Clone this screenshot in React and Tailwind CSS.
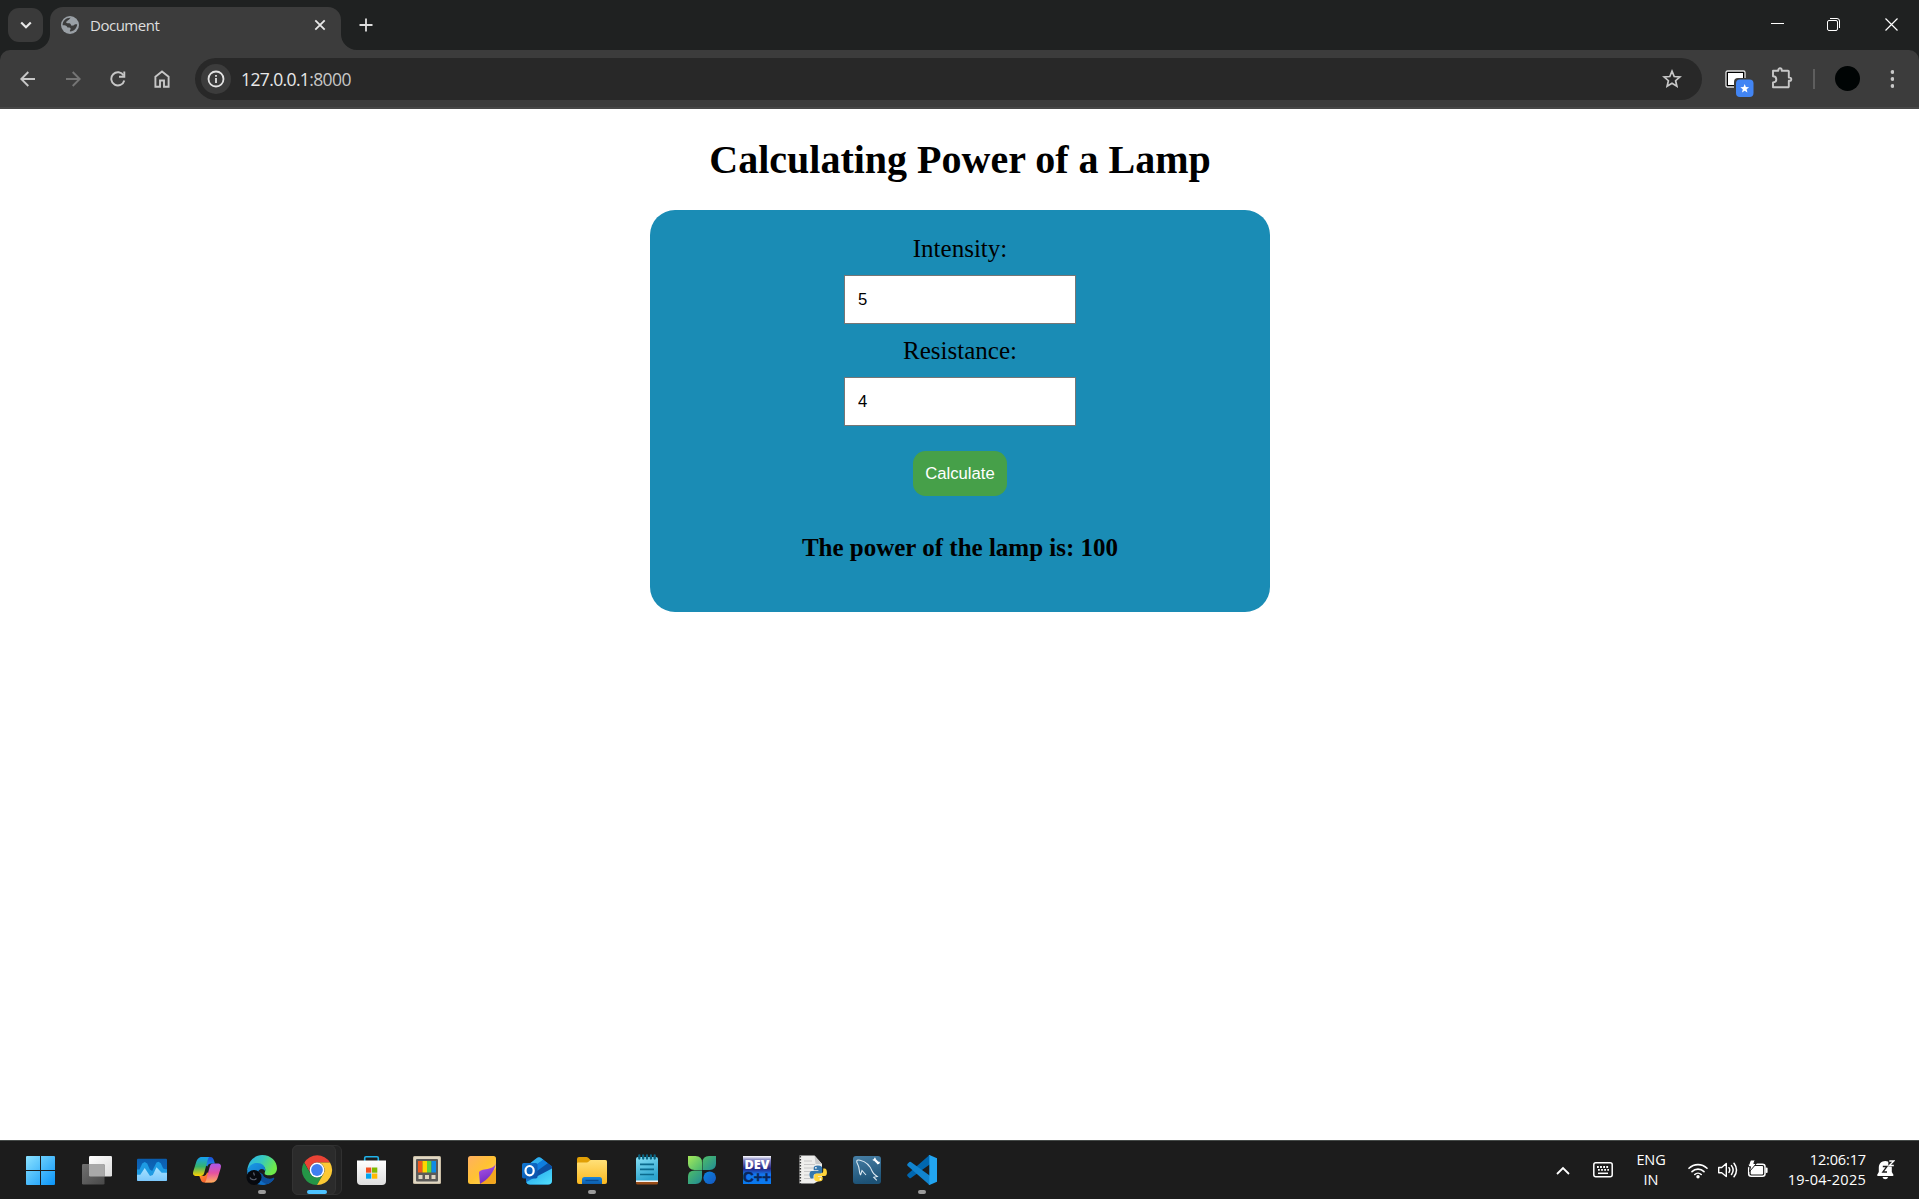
import React from "react";

const Svg = ({ w, h, className = "", children }) => (
  <svg width={w} height={h} viewBox={`0 0 ${w} ${h}`} fill="none" className={`block shrink-0 ${className}`}>
    {children}
  </svg>
);

function TabStrip() {
  return (
    <div className="flex h-[50px] items-end bg-[#1f2121] pl-2 text-[#dedede]">
      <div className="mb-2 flex h-[34px] w-[35px] shrink-0 items-center justify-center rounded-[11px] bg-[#3a3a3a]">
        <Svg w={12} h={8}>
          <path d="M1.2 1.500 6 6.200l4.800-4.700" stroke="#e8e8e8" strokeWidth="2.200" />
        </Svg>
      </div>
      <Svg w={16} h={16} className="-ml-[9px]">
        <path d="M16 0v16H0A16 16 0 0 0 16 0Z" fill="#3c3c3c" />
      </Svg>
      <div className="flex h-[43px] w-[291px] shrink-0 items-center rounded-t-[13px] bg-[#3c3c3c] pb-[7px] pl-[11px] pr-[15px]">
        <Svg w={18} h={18}>
          <circle cx="9" cy="9" r="9" fill="#9aa0a6" />
          <path
            d="M9.800 1.800c-1.200.7-1.300 2-2.300 2.200-1.200.2-.8 1.400-1.900 1.600-.9.200-.3 1.700.7 1.700 1.500 0 3.300-.3 3.600 1.500.2 1.300 1.600.8 2.400.7 1-.2 1.100-1.200 2-1.300h1.900c-.3 4-3.200 7-6.900 7.300-.7-.4-.4-1.600.2-2.100.5-.5-.2-1.800-1.200-1.800H6.500c-.4-1.700-1.900-2.300-4.900-2.300C1.500 5 5 1.500 9.800 1.800Z"
            fill="#3c3c3c"
          />
        </Svg>
        <span className="ml-[11px] grow font-['Open_Sans',sans-serif] text-[15px] leading-5 tracking-[-0.480px]">Document</span>
        <Svg w={12} h={12}>
          <path d="m1.300 1.300 9.400 9.400m0-9.400-9.400 9.400" stroke="#e8e8e8" strokeWidth="1.800" />
        </Svg>
      </div>
      <Svg w={16} h={16}>
        <path d="M0 0v16h16A16 16 0 0 1 0 0Z" fill="#3c3c3c" />
      </Svg>
      <Svg w={14} h={14} className="mb-[18px] ml-[2px]">
        <path d="M7 .5v13M.5 7h13" stroke="#dedede" strokeWidth="1.800" />
      </Svg>
      <div className="mb-[19px] ml-auto flex items-center gap-[43px] pr-[21px] text-white">
        <Svg w={13} h={13}>
          <path d="M0 5.500h13" stroke="currentColor" />
        </Svg>
        <Svg w={13} h={13}>
          <path d="M3 .5h7a2.500 2.500 0 0 1 2.500 2.500v7" stroke="currentColor" />
          <rect x=".5" y="2.500" width="10" height="10" rx="1.500" stroke="currentColor" />
        </Svg>
        <Svg w={13} h={13} className="ml-[2px]">
          <path d="m.5.5 12 12m0-12-12 12" stroke="currentColor" strokeWidth="1.200" />
        </Svg>
      </div>
    </div>
  );
}

function Toolbar() {
  return (
    <div className="bg-[#1f2121]">
      <div className="flex h-[59px] items-center rounded-t-[10px] border-b-2 border-[#474747] bg-[#3c3c3c] pl-5 text-[#c7c7c7]">
        <Svg w={16} h={16}>
          <path d="M15 8H1.500M8.300 1 1.300 8l7 7" stroke="currentColor" strokeWidth="1.900" />
        </Svg>
        <Svg w={16} h={16} className="ml-[29px] text-[#757575]">
          <path d="M1 8h13.500M7.700 1l7 7-7 7" stroke="currentColor" strokeWidth="1.900" />
        </Svg>
        <Svg w={16} h={16} className="ml-[29px]">
          <path d="M14.300 9.500A6.600 6.600 0 1 1 13.600 4.500" stroke="currentColor" strokeWidth="1.900" />
          <path d="M14.300.5v5.200H9" stroke="currentColor" strokeWidth="1.900" />
        </Svg>
        <Svg w={16} h={18} className="ml-[28px]">
          <path d="M1.400 6.700 8 1.500l6.600 5.200v10H10v-6.200H6v6.200H1.400Z" stroke="currentColor" strokeWidth="1.900" />
        </Svg>
        <div className="ml-[25px] flex h-[42px] w-[1507px] shrink-0 items-center rounded-full bg-[#282828] pl-[6px] pr-[20px]">
          <div className="flex size-[30px] items-center justify-center rounded-full bg-[#3c3c3c] text-[#e3e3e3]">
            <Svg w={18} h={18}>
              <circle cx="9" cy="9" r="7.500" stroke="currentColor" strokeWidth="1.800" />
              <path d="M9 8v5M9 5v1.800" stroke="currentColor" strokeWidth="1.800" />
            </Svg>
          </div>
          <div className="ml-[10px] grow font-['Open_Sans',sans-serif] text-[17.500px] leading-6 tracking-[-0.620px]">
            <span className="text-[#e8e8e8]">127.0.0.1</span>
            <span className="text-[#c7c7c7]">:8000</span>
          </div>
          <Svg w={20} h={20}>
            <path
              d="m10 2.200 2.200 5.300 5.700.5-4.300 3.700 1.300 5.600L10 14.300l-4.900 3 1.300-5.600L2.100 8l5.700-.5Z"
              stroke="currentColor"
              strokeWidth="1.700"
            />
          </Svg>
        </div>
        <Svg w={29} h={27} className="ml-[23px] mt-[9px]">
          <rect x="1" y="1" width="19" height="16" rx="1.500" fill="#000" stroke="#e4e4e4" strokeWidth="1.300" />
          <rect x="3" y="3" width="15" height="12" fill="#fff" />
          <rect x="9" y="8" width="20" height="19" rx="4" fill="#3c3c3c" />
          <rect x="11" y="9.500" width="17.500" height="17.500" rx="4" fill="#4285f4" />
          <path d="m19.700 14 1.200 3 3.200.2-2.500 2.100.8 3.100-2.700-1.700-2.700 1.700.8-3.100-2.500-2.100 3.200-.2Z" fill="#fff" />
        </Svg>
        <Svg w={22} h={22} className="ml-[17px] mb-[1px]">
          <path
            d="M2 3.800h5.300V3a1.700 1.700 0 0 1 3.400 0v.8H17a.8.8 0 0 1 .8.800v6h.9a1.600 1.600 0 0 1 0 3.200h-.9v5.600a.8.8 0 0 1-.8.800H2v-4.800c2.400 0 3.300-1.200 3.300-2.800S4.400 9.300 2 9.300Z"
            stroke="currentColor"
            strokeWidth="1.900"
            strokeLinejoin="round"
          />
        </Svg>
        <div className="ml-[20px] h-5 w-[2px] bg-[#5e5e5e]" />
        <div className="ml-5 size-[25px] rounded-full bg-[#000404]" />
        <Svg w={4} h={18} className="ml-[30px]">
          <circle cx="2.500" cy="2" r="1.900" fill="currentColor" />
          <circle cx="2.500" cy="9" r="1.900" fill="currentColor" />
          <circle cx="2.500" cy="16" r="1.900" fill="currentColor" />
        </Svg>
      </div>
    </div>
  );
}

const Field = ({ label, value }) => (
  <label className="flex flex-col items-center">
    <span className="text-[25px] leading-[28px]">{label}</span>
    <input
      defaultValue={value}
      className="mt-[12px] mb-[13px] h-[49px] w-[232px] rounded-none border border-[#767676] bg-white px-[13px] font-['Liberation_Sans',Arial,sans-serif] text-[16.667px] outline-none"
    />
  </label>
);

function Page() {
  return (
    <main className="flex grow flex-col items-center bg-white pl-px font-['Liberation_Serif','Times_New_Roman',serif] text-black">
      <h1 className="mt-[28px] text-[40px] leading-[46px] font-bold">Calculating Power of a Lamp</h1>
      <section className="mt-[27px] flex h-[402px] w-[620px] flex-col items-center rounded-[25px] bg-[#1a8cb5] pt-[25px]">
        <Field label="Intensity:" value="5" />
        <Field label="Resistance:" value="4" />
        <button className="mt-[12px] h-[45px] w-[94px] rounded-[12.500px] bg-[#46a049] font-['Liberation_Sans',Arial,sans-serif] text-[16.667px] text-white">
          Calculate
        </button>
        <p className="mt-[37px] text-[25px] leading-[29px] font-bold">The power of the lamp is: 100</p>
      </section>
    </main>
  );
}

const Grad = ({ id, from, to, x2 = 1, y2 = 1, mid }) => (
  <linearGradient id={id} x1="0" y1="0" x2={x2} y2={y2}>
    <stop stopColor={from} />
    {mid && <stop offset=".5" stopColor={mid} />}
    <stop offset="1" stopColor={to} />
  </linearGradient>
);

const icons = [
  {
    name: "start",
    art: (
      <>
        <linearGradient id="win" gradientUnits="userSpaceOnUse" x1="0" y1="2" x2="29" y2="31">
          <stop stopColor="#8be2ff" />
          <stop offset="1" stopColor="#0a94f8" />
        </linearGradient>
        <path d="M1 2h13v14H0V3q0-1 1-1ZM15 2h13q1 0 1 1v13H15ZM0 17h14v14H1q-1 0-1-1ZM15 17h14v13q0 1-1 1H15Z" fill="url(#win)" />
      </>
    ),
  },
  {
    name: "task-view",
    art: (
      <>
        <Grad id="tvA" from="#fff" to="#dcdcdc" />
        <Grad id="tvB" from="#707070" to="#484848" />
        <rect x="8" y="2" width="23" height="20.500" rx="1.300" fill="url(#tvA)" />
        <rect x="1" y="10" width="22.500" height="20.500" rx="1.300" fill="url(#tvB)" />
        <path d="M8 10h14.200q1.300 0 1.300 1.300V22.500H9.300Q8 22.500 8 21.200Z" fill="#a9a9a9" />
      </>
    ),
  },
  {
    name: "monitor",
    art: (
      <>
        <Grad id="mnA" from="#0a5cad" to="#1272c6" x2={0} />
        <Grad id="mnB" from="#a8e2ff" to="#7cc8fb" x2={0} />
        <rect x="1" y="4.700" width="30" height="22.300" rx="1" fill="url(#mnA)" />
        <path d="M1 15.500h2.500l2.700-6 2.500-1.500 2.500 1.500 2.600 6 2.400 1.500 4.300-8.500 2-.8 2.300 1.500 2.400 5.300 2.300.8H31V24H1Z" fill="#1e9be3" />
        <path d="M1 20.700h3.300L8.700 14l5.300 8 2.800-1 3.700-7.700 5.200 5.500H31V26q0 1-1 1H2q-1 0-1-1Z" fill="url(#mnB)" />
      </>
    ),
  },
  {
    name: "copilot",
    art: (
      <>
        <Grad id="cpA" from="#159ff5" mid="#35b36d" to="#ffd100" x2={0} />
        <Grad id="cpB" from="#a957ed" mid="#e650a0" to="#ffb05a" x2={0} />
        <Grad id="cpC" from="#1b4fd8" to="#2093f0" x2={0} />
        <Grad id="cpD" from="#ff9b2e" to="#f4482f" />
        <path d="M11 3h8.500c2 0 2.800 1.300 3.400 3.200l1 3.300h-3.400c-2.500 0-3.500 1-4.200 3L13 10Z" fill="url(#cpC)" />
        <path d="M21 28.500h-7.800c-2.300 0-3-1.300-3.600-3.200L8.300 22h3.800c2.400 0 3.300-1.500 4-3.800L19 21Z" fill="url(#cpD)" />
        <path d="M18.500 3H11C7.500 3 6 5.500 4.900 9L2.400 17c-1.100 3.500 0 5 3.300 5h4c2 0 2.900-1 3.500-3l3.100-11.500C17 5 17.400 3.600 18.500 3Z" fill="url(#cpA)" />
        <path d="M13.500 28.500H21c3.500 0 5-2.500 6.100-6l2.500-8c1.100-3.500 0-5-3.300-5h-4c-2 0-2.900 1-3.500 3L15.700 24c-.7 2.500-1.100 3.900-2.200 4.500Z" fill="url(#cpB)" />
      </>
    ),
  },
  {
    name: "edge",
    dot: true,
    art: (
      <>
        <Grad id="edA" from="#2cb2ec" mid="#36c8c0" to="#6eea4a" y2={0.4} />
        <Grad id="edB" from="#1a9be6" to="#0b5db8" />
        <path d="M1.200 18C1 9 7.500 1 16.200 1 25 1 31 7.500 31 14.300c0 4.500-3.300 7-7.300 7-3.500 0-5.400-1.200-5.400-2.400 0-.8 1-1 1-3C19.300 13 16 10.500 11.500 10.500 6 10.500 2 14 1.200 18Z" fill="url(#edA)" />
        <path d="M1.200 18C2 12.500 6 8.800 11.500 9c4.500.2 7.800 3 7.800 6.900 0 .5-.2 1.200-.4 1.600-1-3.500-6.900-2.500-6.900 1.500 0 6 6 9.500 11.500 7.800L28 25c-2.500 3.800-6.800 6-11.500 6C8 31 1.500 25.500 1.200 18Z" fill="url(#edB)" />
        <path d="M12 19c0 6 5 10 9 11.200 3-1 5.600-3 7.300-5.700.3-.5-.5-.9-1-.7-2 .8-3.400 1-5.400.7-3-.5-5.200-2.500-5.200-5.200 0-3-4.700-3.600-4.700-.3Z" fill="#0d4f9c" />
        <path d="M12.500 17.500c.5-3 6-3.300 6.500.2-.7.700-.7 1.500-.4 2l-2 .5Z" fill="#1c1c1c" />
        <circle cx="8" cy="23.500" r="7.500" fill="#07090e" />
        <path d="m7.500 18.500 1 3m-4.500 2c1 2.500 4.500 3 6.500 1" stroke="#596170" strokeWidth="1.200" />
      </>
    ),
  },
  {
    name: "chrome",
    active: true,
    art: (
      <>
        <path d="M3.400 8.500A15 15 0 0 1 29 8.500H16a7.500 7.500 0 0 0-6.500 11.250Z" fill="#ea4335" />
        <path d="M3 8.500A15 15 0 0 0 16 31l6.500-11.250a7.500 7.500 0 0 1-13 0Z" fill="#249647" />
        <path d="M29 8.500A15 15 0 0 1 16 31l6.500-11.250A7.500 7.500 0 0 0 16 8.500Z" fill="#fcc934" />
        <circle cx="16" cy="16" r="7.400" fill="#fff" />
        <circle cx="16" cy="16" r="5.900" fill="#3f7ff0" />
      </>
    ),
  },
  {
    name: "store",
    art: (
      <>
        <Grad id="st" from="#fff" to="#dedede" x2={0} />
        <path d="M8.700 7.500V4q0-1.300 1.300-1.300h11q1.300 0 1.300 1.300v3.500" stroke="#20b3ea" strokeWidth="1.600" />
        <path d="M1 6.500h29V27q0 4-4 4H5q-4 0-4-4Z" fill="url(#st)" />
        <path d="M10 13.500h5.300v5.200H10Z" fill="#f25022" />
        <path d="M16 13.500h5.300v5.200H16Z" fill="#7fba00" />
        <path d="M10 19.500h5.300v5.200H10Z" fill="#00a4ef" />
        <path d="M16 19.500h5.300v5.200H16Z" fill="#ffb900" />
      </>
    ),
  },
  {
    name: "powertoys",
    art: (
      <>
        <rect x="2" y="2" width="28" height="28" rx="1.500" fill="#c9bda5" />
        <rect x="3" y="3" width="26" height="26" rx="1" fill="#e0d7c3" />
        <rect x="5" y="5" width="22" height="22.500" rx="1" fill="#5b5a58" />
        <path d="M7 7h4.500v11.500H7Z" fill="#f25a1d" />
        <path d="M11.500 7H16v11.500h-4.500Z" fill="#ffd500" />
        <path d="M16 7h4.500v11.500H16Z" fill="#5fd33e" />
        <path d="M20.500 7H25v11.500h-4.500Z" fill="#0e8de8" />
        <path d="M7.500 21h4v4h-4ZM14 21h4v4h-4ZM20.500 21h4v4h-4Z" fill="#ded5c2" />
      </>
    ),
  },
  {
    name: "sticky-notes",
    art: (
      <>
        <Grad id="snA" from="#ffb060" mid="#ffc233" to="#ffd957" />
        <Grad id="snB" from="#b45cf0" to="#712bc0" x2={0.3} />
        <rect x="2" y="2" width="28" height="28" rx="2.500" fill="url(#snA)" />
        <path d="M30 14v13.500q0 2.500-2.500 2.500H14Z" fill="#f2a51e" />
        <path d="M30 8.500c-.8 3.700-3.500 5.500-8.500 6.500-4.500.9-8.500 1-8.500 4l1 11C21 26 28.500 19 30 8.500Z" fill="url(#snB)" />
      </>
    ),
  },
  {
    name: "outlook",
    art: (
      <>
        <Grad id="olA" from="#0f78d4" to="#0c4fa8" />
        <Grad id="olB" from="#1fa0ea" to="#52e0fc" />
        <path d="M5 12.500 16.300 3.800q1.700-1.300 3.400 0L31 12.500v14q0 4-4 4H9q-4 0-4-4Z" fill="#1272cb" />
        <path d="M5 12.500 16.300 3.800q1.700-1.300 3.400 0l2.600 2L8 16Z" fill="#2fb0ee" />
        <path d="m22.300 5.800 4.500 3.400L12 20l-4-4Z" fill="#0f7ee0" />
        <path d="m26.800 9.200 4.200 3.300v3L14 26.500 12 20Z" fill="#0b4ea2" />
        <path d="M31 14.500v12q0 4-4 4H9q-3 0-3.700-2.500Z" fill="url(#olB)" />
        <rect x="1" y="9" width="15.500" height="15.500" rx="1.800" fill="url(#olA)" />
        <ellipse cx="8.600" cy="16.700" rx="4.100" ry="4.700" stroke="#fff" strokeWidth="2.200" />
      </>
    ),
  },
  {
    name: "explorer",
    dot: true,
    art: (
      <>
        <Grad id="exA" from="#ffe078" to="#fbb81e" x2={0} />
        <Grad id="exB" from="#1a86dc" to="#0c5cab" x2={0} />
        <path d="M1 5q0-2 2-2h7.500q1 0 1.800.8L14.500 6H29q2 0 2 2v5H1Z" fill="#e19f05" />
        <path d="M1 9.500q0-1 1-1h8.800q1 0 1.700-.8l.8-.8q.7-.9 1.800-.9H29q2 0 2 2v20q0 2-2 2H3q-2 0-2-2Z" fill="url(#exA)" />
        <path d="M6 30v-4.500q0-2.500 2.500-2.500h15q2.500 0 2.500 2.500V30Z" fill="url(#exB)" />
        <path d="M9.500 26.500h13" stroke="#0a4a8e" strokeWidth="1.300" />
      </>
    ),
  },
  {
    name: "notepad",
    art: (
      <>
        <Grad id="np" from="#86dff5" to="#2ea6cf" x2={0.4} />
        <path d="M5 26h22v3q0 1.500-1.500 1.500h-19Q5 30.500 5 29Z" fill="#9a4d18" />
        <path d="M5 25h22v3H5Z" fill="#f1f1f1" />
        <path d="M5 5q0-2 2-2h18q2 0 2 2v21.500H5Z" fill="url(#np)" />
        <path d="M9 10.300h14M9 15.300h14M9 20.500h14" stroke="#0b6a8d" strokeWidth="1.700" />
        <path d="M8.300 1.500v3M12.200 1.500v3M16 1.500v3M19.900 1.500v3M23.700 1.500v3" stroke="#0b6481" strokeWidth="2.300" strokeLinecap="round" />
      </>
    ),
  },
  {
    name: "clover",
    art: (
      <>
        <Grad id="clA" from="#a5e85a" to="#45b873" />
        <Grad id="clB" from="#4fbd67" to="#208b96" />
        <Grad id="clC" from="#0c83e0" to="#1557c0" />
        <path d="M2 2h7.500Q16 2 16 8.500V16H8.500Q2 16 2 9.500Z" fill="url(#clA)" />
        <path d="M30 2v7.500q0 6.500-6.500 6.500H16.500V8.500Q16.500 2 23 2Z" fill="url(#clB)" />
        <path d="M2 30V22.500Q2 16.500 8.500 16.500H16V23.500Q16 30 9.500 30Z" fill="url(#clB)" />
        <circle cx="23.700" cy="23.700" r="6.300" fill="url(#clC)" />
      </>
    ),
  },
  {
    name: "dev-cpp",
    art: (
      <>
        <linearGradient id="dv" x1="0" y1="0" x2="0" y2="1">
          <stop stopColor="#fff" />
          <stop offset=".14" stopColor="#8587c5" />
          <stop offset=".45" stopColor="#252684" />
          <stop offset=".65" stopColor="#1476ee" />
          <stop offset="1" stopColor="#0879ef" />
        </linearGradient>
        <rect x="2" y="2" width="28" height="28" fill="url(#dv)" />
        <text x="16" y="14.700" textAnchor="middle" textLength="25" lengthAdjust="spacingAndGlyphs" fontFamily="Open Sans, sans-serif" fontWeight="800" fontSize="12.500" fill="#fff">
          DEV
        </text>
        <text x="16" y="28" textAnchor="middle" textLength="28" lengthAdjust="spacingAndGlyphs" fontFamily="Liberation Sans, sans-serif" fontWeight="700" fontSize="14.500" fill="#0a2659" stroke="#0a2659" strokeWidth=".5">
          C++
        </text>
      </>
    ),
  },
  {
    name: "python-idle",
    art: (
      <>
        <path d="M3.500 1.500h15L26 10v15l-8 4.500H3.500Z" fill="#eeeeec" />
        <path d="M18.500 1.500 26 10h-6.500Z" fill="#c9c9c9" />
        <path d="M4.300 2v28" stroke="#3b3b3b" strokeWidth="1.600" strokeDasharray="1.500 1.500" />
        <path d="M8 7h8M8 10.500h11M8 14h10M8 17.500h8M8 21h7M8 24.500h8" stroke="#c8c8c8" strokeWidth="1.100" />
        <g transform="translate(-1.800 .3)">
          <path d="M23.700 11.200c-3.200 0-4.200.9-4.200 2.700v2h4.700v.8h-6.500c-2 0-2.400 1.800-2.400 3.800 0 2.200.9 3.700 2.300 3.700h1.700v-2.300c0-1.500 1-2.400 2.500-2.400h3.900c1.400 0 2.300-.9 2.300-2.300v-3.300c0-1.800-1.500-2.700-4.300-2.700Z" fill="#3577ad" />
          <path d="M24.300 27.200c3.200 0 4.200-.9 4.200-2.700v-2h-4.700v-.8h6.500c2 0 2.400-1.800 2.400-3.800 0-2.200-.9-3.700-2.300-3.700h-1.400v2.600c0 1.500-1 2.400-2.500 2.400h-3.900c-1.400 0-2.600.9-2.600 2.300v3c0 1.800 1.500 2.700 4.300 2.700Z" fill="#ffd43b" />
          <circle cx="21.700" cy="13.500" r=".9" fill="#fff" />
          <circle cx="26.200" cy="24.800" r=".9" fill="#fff" />
        </g>
      </>
    ),
  },
  {
    name: "mysql-workbench",
    art: (
      <>
        <Grad id="my" from="#477fa5" to="#1d5276" x2={0.2} />
        <rect x="2" y="2" width="28" height="28" rx="3" fill="url(#my)" />
        <path d="M9.500 21C7.500 17.500 9 14.500 7 11 5 7.500 5 5.300 9 6.200c6 1.300 10 5.300 12.300 11.300 1 2.500 3 3.500 5 5l-3.500.8 3 3M9.500 21l1.500-4.500 4 4.500" stroke="#dce9f2" strokeWidth="1.100" />
        <path d="m23.500 5.500 4 4" stroke="#fff" strokeWidth="2.400" />
        <path d="M21.800 6.200l1.700-.7.700-1.800m1.800 6 1.700-.2.600-1.800" stroke="#fff" strokeWidth="1.300" />
      </>
    ),
  },
  {
    name: "vscode",
    dot: true,
    art: (
      <>
        <path d="m1.500 20.200 22-19.200L25 9.500 4.900 24q-.8.5-1.500 0l-1.800-1.700q-.9-1-.1-2.100Z" fill="#0067b0" />
        <path d="m1.500 11.800 22 19.200L25 22.500 4.900 8q-.8-.5-1.500 0L1.600 9.700q-.9 1-.1 2.100Z" fill="#1184cf" />
        <path d="M23.500 1 31 4.300v23.400L23.500 31q-1 .3-1.500-.6 1.300 1.200 1.300-.6V2.300q0-1.800-1.300-.8.500-.8 1.500-.5Z" fill="#22a5f1" />
      </>
    ),
  },
];

function TaskIcon({ icon }) {
  return (
    <div className="relative flex h-[58px] w-[55px] shrink-0 flex-col items-center pt-[13px]">
      {icon.active && (
        <>
          <div className="absolute top-[4px] left-[2.500px] h-[50px] w-[50px] rounded-[6px] border border-[#303030] bg-[#232323]" />
          <div className="absolute top-[4px] left-[2.500px] h-[50px] w-[44px] rounded-[6px] border border-[#333] bg-[#2b2b2b]" />
        </>
      )}
      <Svg w={32} h={32} className="relative overflow-visible">
        {icon.art}
      </Svg>
      {icon.dot && <div className="mt-[4px] h-[4px] w-[8px] rounded-full bg-[#9b9b9b]" />}
      {icon.active && <div className="relative mt-[4px] h-[4px] w-[20px] rounded-full bg-[#4cc2ff]" />}
    </div>
  );
}

function Taskbar() {
  return (
    <footer className="flex h-[59px] items-center border-t border-[#454a48] bg-[#1c1c1c] pl-[14.500px] font-['Open_Sans',sans-serif] text-[14.500px] leading-[20px] text-white">
      {icons.map((icon) => (
        <TaskIcon key={icon.name} icon={icon} />
      ))}
      <Svg w={14} h={9} className="ml-auto">
        <path d="m1 8 6-6 6 6" stroke="#fff" strokeWidth="1.800" />
      </Svg>
      <Svg w={20} h={16} className="ml-[23px]">
        <rect x=".8" y=".8" width="18.400" height="14" rx="2" stroke="#fff" strokeWidth="1.500" />
        <path d="M4 5h12M5 7.800h11" stroke="#fff" strokeWidth="1.800" strokeDasharray="1.800 1.300" />
        <path d="M5 11.300h10" stroke="#fff" strokeWidth="1.500" />
      </Svg>
      <div className="ml-[20px] w-[36px] text-center tracking-[-0.1px]">
        <div>ENG</div>
        <div>IN</div>
      </div>
      <Svg w={20} h={17} className="ml-[19px]">
        <path d="M1 6.300a12.800 12.800 0 0 1 18 0M4 9.600a8.600 8.600 0 0 1 12 0M6.800 12.500a4.600 4.600 0 0 1 6.400 0" stroke="#fff" strokeWidth="1.600" strokeLinecap="round" />
        <circle cx="10" cy="14.800" r="1.700" fill="#fff" />
      </Svg>
      <Svg w={20} h={16} className="ml-[10px]">
        <path d="M.7 5.500h3L8.300 1.500v13L3.700 10.800h-3Z" stroke="#fff" strokeWidth="1.400" strokeLinejoin="round" />
        <path d="M11 5.700q1.500 2.400 0 4.700M13.500 3.600q3.300 4.400 0 8.900M16 1.300q5 6.700 0 13.400" stroke="#fff" strokeWidth="1.500" strokeLinecap="round" />
      </Svg>
      <Svg w={21} h={18} className="mb-[2px] ml-[9px]">
        <rect x="1.700" y="4.200" width="16.300" height="12" rx="2.500" stroke="#fff" strokeWidth="1.500" />
        <rect x="3.700" y="6" width="12.400" height="8.400" rx="1" fill="#fff" />
        <path d="M19.600 8.500v3.500" stroke="#fff" strokeWidth="2" strokeLinecap="round" />
        <path d="M3.500 0h4.700L6.800 3.500h2.700L2.500 11.500l1-4.800H1Z" fill="#fff" stroke="#1c1c1c" strokeWidth="1" />
      </Svg>
      <div className="ml-[8px] w-[90px] text-right">
        <div className="tracking-[-0.140px]">12:06:17</div>
        <div className="tracking-[0.260px]">19-04-2025</div>
      </div>
      <Svg w={18} h={20} className="mr-[24px] ml-[11px]">
        <path d="M8.300 1C4.500 1 1.800 3.800 1.800 7.500V12L.2 14.800q-.3 1.200.9 1.200h14.400q1.200 0 .9-1.200L14.800 12V7.500C14.800 3.800 12 1 8.300 1Z" fill="#fff" />
        <path d="M5.500 17h5.600q-.5 2.200-2.800 2.200T5.500 17Z" fill="#fff" />
        <path d="M5.800 6.500H10L5.800 12H10" stroke="#1c1c1c" strokeWidth="1.300" />
        <path d="M11.300 0H18v6.500h-6.700Z" fill="#1c1c1c" />
        <path d="M12.300 1h4.500l-4.500 4.500h4.500" stroke="#fff" strokeWidth="1.300" />
      </Svg>
    </footer>
  );
}

export default function App() {
  return (
    <div className="flex h-[1199px] w-[1919px] flex-col overflow-hidden bg-white">
      <TabStrip />
      <Toolbar />
      <Page />
      <Taskbar />
    </div>
  );
}
